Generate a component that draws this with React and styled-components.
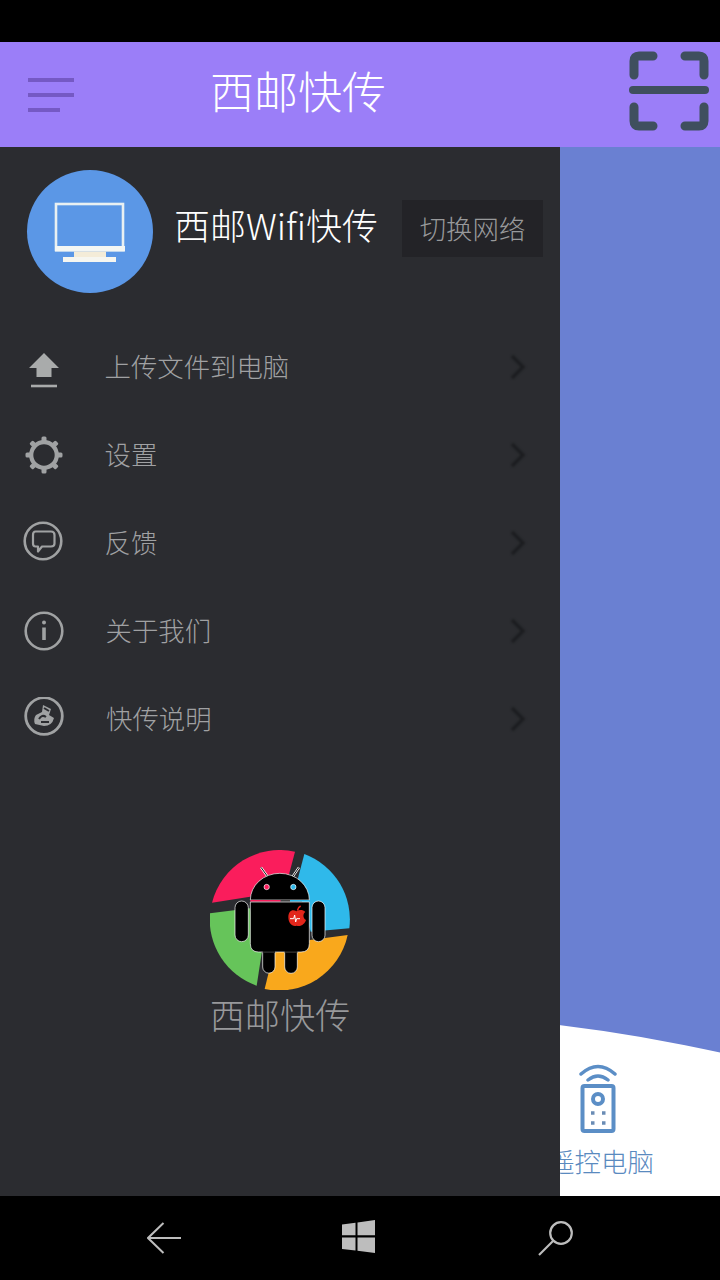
import React from "react";
import styled, { createGlobalStyle } from "styled-components";

const Global = createGlobalStyle`
  html, body { margin: 0; padding: 0; background: #000; }
  * { box-sizing: border-box; }
  #root { width: 720px; height: 1280px; overflow: hidden; }
`;

const Screen = styled.div`
  width: 720px;
  height: 1280px;
  display: flex;
  flex-direction: column;
  background: #000;
  font-family: "Noto Sans CJK SC", "Noto Sans", sans-serif;
  font-weight: 300;
`;
const StatusBar = styled.div`
  height: 42px;
  flex: none;
  background: #000;
`;
const Header = styled.header`
  height: 105px;
  flex: none;
  display: flex;
  align-items: center;
  padding: 0 11px 0 28px;
  background: #9b7ef8;
`;
const MenuGlyph = styled.svg`
  width: 46px;
  height: 36px;
  flex: none;
  filter: blur(0.6px);
`;
const ScanGlyph = styled.svg`
  width: 80px;
  height: 80px;
  flex: none;
  margin-bottom: 7px;
  filter: blur(0.5px);
`;
const Title = styled.h1`
  margin: 0 0 9px 136px;
  flex: 1;
  font-size: 44px;
  line-height: 60px;
  font-weight: 300;
  color: #fff;
`;
const Main = styled.main`
  position: relative;
  height: 1049px;
  flex: none;
  display: flex;
  flex-direction: column;
  justify-content: flex-end;
  background: #6a80d2;
  overflow: hidden;
`;
const WavePanel = styled.section`
  height: 183px;
  display: flex;
  justify-content: flex-end;
  padding: 49px 67px 0 0;
  background: #fff;
  clip-path: circle(1660px at 360px 1660px);
`;
const Tool = styled.div`
  width: 104px;
  display: flex;
  flex-direction: column;
  align-items: center;
`;
const ToolGlyph = styled.svg`
  width: 38px;
  height: 72px;
  flex: none;
  margin-left: -7px;
  filter: blur(0.5px);
`;
const ToolLabel = styled.span`
  margin-top: 9px;
  font-size: 26.4px;
  line-height: 36px;
  white-space: nowrap;
  color: #5a8abf;
`;
const Drawer = styled.aside`
  position: absolute;
  left: 0;
  top: 0;
  bottom: 0;
  width: 560px;
  display: flex;
  flex-direction: column;
  background: #2b2c30;
`;
const Profile = styled.div`
  height: 176px;
  display: flex;
  align-items: flex-start;
  padding: 23px 17px 0 27px;
`;
const Avatar = styled.div`
  width: 126px;
  height: 123px;
  flex: none;
  display: flex;
  align-items: center;
  justify-content: center;
  border-radius: 50%;
  background: #5b97e6;
`;
const MonitorGlyph = styled.svg`
  width: 72px;
  height: 60px;
  filter: blur(0.5px);
`;
const ProfileName = styled.div`
  margin: 29px 0 0 21px;
  flex: 1;
  font-size: 36px;
  line-height: 50px;
  white-space: nowrap;
  color: #fff;
`;
const SwitchButton = styled.button`
  width: 141px;
  height: 57px;
  margin-top: 30px;
  flex: none;
  border: 0;
  padding: 0 0 2px;
  font: inherit;
  font-size: 26.4px;
  color: #98999b;
  background: #232327;
`;
const Menu = styled.ul`
  margin: 0;
  padding: 0;
  list-style: none;
`;
const MenuRow = styled.li`
  height: 88px;
  display: flex;
  align-items: center;
  padding: 0 33px 0 22px;
`;
const MenuIcon = styled.span`
  width: 44px;
  height: 44px;
  flex: none;
  display: flex;
  filter: blur(0.4px);
`;
const MenuLabel = styled.span`
  flex: 1;
  margin: 0 0 2px ${(p) => p.$indent}px;
  font-size: 26.4px;
  line-height: 36px;
  color: #a0a1a3;
`;
const Chevron = styled.svg`
  width: 18px;
  height: 26px;
  flex: none;
  filter: blur(0.9px);
`;
const Brand = styled.div`
  margin-top: 87px;
  display: flex;
  flex-direction: column;
  align-items: center;
`;
const BrandName = styled.div`
  margin-top: -1px;
  font-size: 35.2px;
  line-height: 50px;
  color: #98999b;
`;
const NavBar = styled.nav`
  height: 84px;
  flex: none;
  display: flex;
  align-items: center;
  gap: 161px;
  padding-left: 147px;
  background: #000;
`;
const WindowsGlyph = styled.svg`
  width: 33px;
  height: 33px;
  flex: none;
  margin-bottom: 3px;
`;

const items = [
  { label: "上传文件到电脑", indent: 38.5, icon: "upload" },
  { label: "设置", indent: 38.5, icon: "gear" },
  { label: "反馈", indent: 38.5, icon: "chat" },
  { label: "关于我们", indent: 39.5, icon: "info" },
  { label: "快传说明", indent: 40, icon: "guide" },
];

const G = "#a0a2a3";

function Icon({ name }) {
  const common = { width: 44, height: 44, viewBox: "0 0 44 44", fill: "none" };
  if (name === "upload")
    return (
      <svg {...common}>
        <path d="M22 8 L37 23 H29.5 V32 H14.5 V23 H7 Z" fill="#a9abab" />
        <path d="M9 41 H35" stroke="#a9abab" strokeWidth="2.6" />
      </svg>
    );
  if (name === "gear")
    return (
      <svg {...common}>
        <circle cx="22" cy="22" r="12.800" stroke={G} strokeWidth="4.200" />
        {[0, 45, 90, 135, 180, 225, 270, 315].map((a) => (
          <rect key={a} x="19.5" y="3.5" width="5" height="6" rx="1.5" fill={G} transform={`rotate(${a} 22 22)`} />
        ))}
      </svg>
    );
  if (name === "chat")
    return (
      <svg {...common}>
        <circle cx="21" cy="20" r="18.3" stroke={G} strokeWidth="2.6" />
        <path d="M13.5 10.5 H29 Q32.5 10.500 32.500 14 V22.500 Q32.500 25.500 29 25.500 H20 L16 30.500 L16 25.500 H13.500 Q11 25.500 11 22.500 V14 Q11 10.500 13.500 10.500 Z" stroke={G} strokeWidth="2.2" strokeLinejoin="round" />
      </svg>
    );
  if (name === "info")
    return (
      <svg {...common}>
        <circle cx="22" cy="22" r="18.300" stroke={G} strokeWidth="2.600" />
        <circle cx="22" cy="13.500" r="2" fill={G} />
        <path d="M22 18.500 V31" stroke={G} strokeWidth="3.600" />
      </svg>
    );
  return (
    <svg {...common}>
      <circle cx="22" cy="19" r="18.300" stroke={G} strokeWidth="2.800" />
      <path d="M21 8 L29 12 L27 18 L32 21 Q30 29 22 29 L13 27 Q11 22 14 18 L20 15 Z" fill={G} />
      <path d="M17 22 Q20 17 24 20 M22 11 L27 14 M19 25 L27 25" stroke="#2b2c30" strokeWidth="2" />
    </svg>
  );
}

const Logo = () => (
  <svg width="140" height="140" viewBox="60 30 420 420">
    <path d="M66 188 A210 210 0 0 1 315 35 L290 130 L180 170 Z" fill="#fa1d5c" />
    <path d="M343 42 A210 210 0 0 1 478 265 L362 275 L320 130 Z" fill="#2fb9ea" />
    <path d="M473 285 A210 210 0 0 1 224 447 L250 340 L360 300 Z" fill="#f9a81c" />
    <path d="M200 437 A210 210 0 0 1 60 220 L180 205 L215 340 Z" fill="#66c45a" />
    <path d="M213 82 L233 110 M327 82 L308 110" stroke="#fff" strokeWidth="7" />
    <path d="M213 82 L233 110 M327 82 L308 110" stroke="#111" strokeWidth="3" />
    <path d="M181 180 A88.500 80 0 0 1 358 180 Z" fill="#000" stroke="#fff" strokeWidth="2" />
    <rect x="181" y="180" width="91" height="5" fill="#fa1d5c" />
    <rect x="272" y="180" width="28" height="5" fill="#444" />
    <rect x="300" y="180" width="58" height="5" fill="#2fb9ea" />
    <path d="M181 186 H358 V311 Q358 336 333 336 H206 Q181 336 181 311 Z" fill="#000" stroke="#fff" strokeWidth="2" />
    <rect x="135" y="183" width="40" height="122" rx="20" fill="#000" stroke="#fff" strokeWidth="2" />
    <rect x="366" y="183" width="39" height="122" rx="19.500" fill="#000" stroke="#fff" strokeWidth="2" />
    <path d="M218 337 H255 V381 A18.500 18.500 0 0 1 218 381 Z" fill="#000" stroke="#fff" strokeWidth="2" />
    <path d="M284 337 H322 V381 A19 19 0 0 1 284 381 Z" fill="#000" stroke="#fff" strokeWidth="2" />
    <path d="M218 336 H255 M284 336 H322" stroke="#000" strokeWidth="4" />
    <circle cx="230" cy="141" r="8" fill="#fa1d5c" stroke="#fff" strokeWidth="2" />
    <circle cx="310" cy="141" r="8" fill="#2fb9ea" stroke="#fff" strokeWidth="2" />
    <path d="M320 214 C308 206 295 212 295 232 C295 250 308 262 320 257 C332 262 346 250 348 240 C338 234 338 222 346 216 C338 208 328 209 320 214 Z" fill="#e2261b" />
    <path d="M322 212 Q324 202 332 198" stroke="#e2261b" strokeWidth="5" fill="none" />
    <path d="M300 236 H311 L314 225 L317 246 L320 236 H330" stroke="#fff" strokeWidth="3" fill="none" />
  </svg>
);

export default function App() {
  return (
    <Screen>
      <Global />
      <StatusBar />
      <Header>
        <MenuGlyph viewBox="0 0 46 36">
          <path d="M0 3 H46 M0 18 H46 M0 33 H32" stroke="#7559c4" strokeWidth="4.200" />
        </MenuGlyph>
        <Title>西邮快传</Title>
        <ScanGlyph viewBox="0 0 80 80" fill="none">
          <path d="M24 5 H10 Q5 5 5 10 V24 M56 5 H70 Q75 5 75 10 V24 M5 56 V70 Q5 75 10 75 H24 M75 56 V70 Q75 75 70 75 H56" stroke="#3f4f5e" strokeWidth="9" strokeLinecap="round" />
          <path d="M4 39 H76" stroke="#3f4f5e" strokeWidth="8" strokeLinecap="round" />
        </ScanGlyph>
      </Header>
      <Main>
        <WavePanel>
          <Tool>
            <ToolGlyph viewBox="0 0 38 72" fill="none">
              <path d="M2 12 Q19 -3 36 12 M9 18 Q19 10 29 18" stroke="#5b8ec6" strokeWidth="3.500" strokeLinecap="round" />
              <rect x="3.500" y="24" width="31" height="45" rx="2" stroke="#5b8ec6" strokeWidth="4" />
              <circle cx="19" cy="37" r="5" stroke="#5b8ec6" strokeWidth="4" />
              <path d="M12 51 h3.500 M23 51 h3.500 M12 61 h3.500 M23 61 h3.500" stroke="#6a8cb5" strokeWidth="3.500" />
            </ToolGlyph>
            <ToolLabel>遥控电脑</ToolLabel>
          </Tool>
        </WavePanel>
        <Drawer>
          <Profile>
            <Avatar>
              <MonitorGlyph viewBox="0 0 72 60" fill="none">
                <rect x="2" y="2" width="67" height="46" stroke="#e9f0f2" strokeWidth="2.600" />
                <rect x="1" y="44" width="70" height="5.500" fill="#f3f6f4" />
                <rect x="20" y="49.500" width="32" height="6" fill="#f4ecd8" />
                <rect x="9" y="55" width="53" height="5" fill="#f6f6f0" />
              </MonitorGlyph>
            </Avatar>
            <ProfileName>西邮Wifi快传</ProfileName>
            <SwitchButton>切换网络</SwitchButton>
          </Profile>
          <Menu>
            {items.map((it) => (
              <MenuRow key={it.label}>
                <MenuIcon><Icon name={it.icon} /></MenuIcon>
                <MenuLabel $indent={it.indent}>{it.label}</MenuLabel>
                <Chevron viewBox="0 0 18 26" fill="none">
                  <path d="M3 2 L14 13 L3 24" stroke="#1c1d20" strokeWidth="3.500" />
                </Chevron>
              </MenuRow>
            ))}
          </Menu>
          <Brand>
            <Logo />
            <BrandName>西邮快传</BrandName>
          </Brand>
        </Drawer>
      </Main>
      <NavBar>
        <svg width="34" height="32" viewBox="0 0 34 32" fill="none">
          <path d="M34 16 H1 M16.500 1 L1 16 L16.500 31" stroke="#bdbdbd" strokeWidth="2" />
        </svg>
        <WindowsGlyph viewBox="0 0 33 33">
          <path d="M0 4.500 L13.500 2.800 V15.300 H0 Z M15.500 2.500 L33 0 V15.300 H15.500 Z M0 17.500 H13.500 V30.500 L0 29 Z M15.500 17.500 H33 V33 L15.500 30.800 Z" fill="#bdbdbd" />
        </WindowsGlyph>
        <svg width="37" height="35" viewBox="0 0 37 35" fill="none">
          <circle cx="25" cy="12" r="10.800" stroke="#bdbdbd" strokeWidth="2.200" />
          <path d="M17 20 L3 34" stroke="#bdbdbd" strokeWidth="2.200" />
        </svg>
      </NavBar>
    </Screen>
  );
}
